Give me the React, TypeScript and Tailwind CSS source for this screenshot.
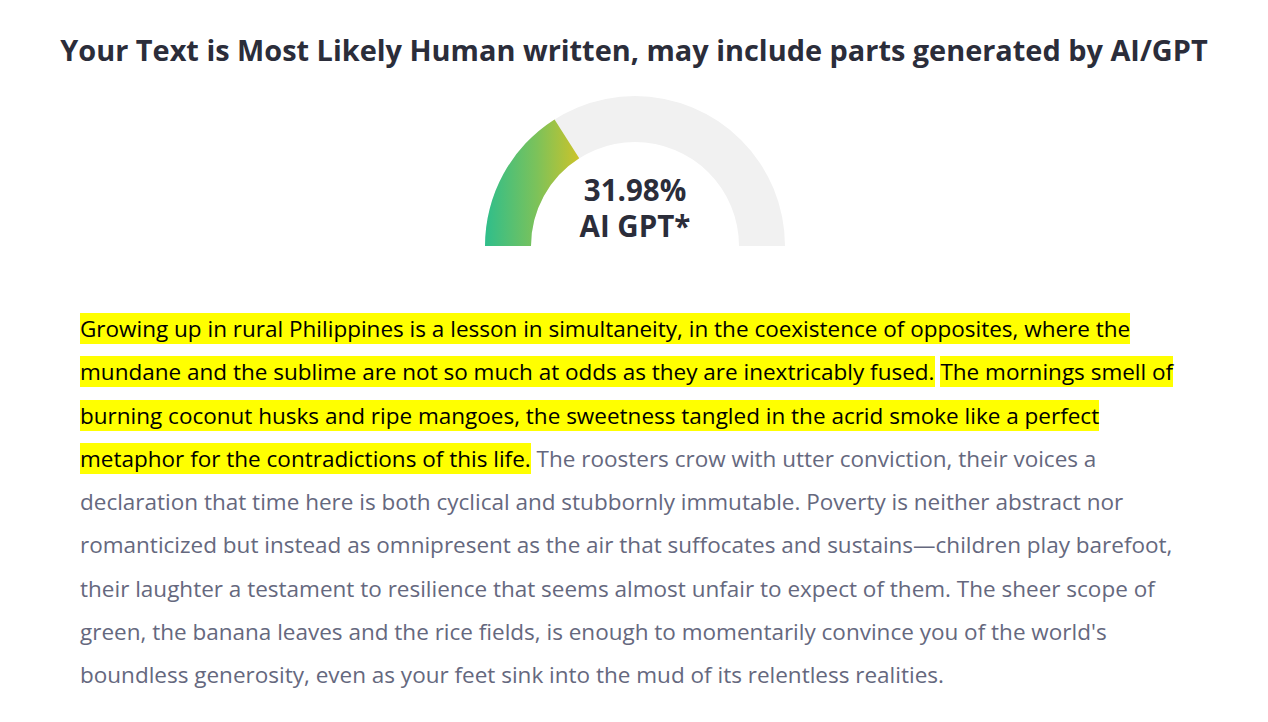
const Gauge = ({ value }: { value: number }) => {
  const a = Math.PI * (1 - value / 100);
  const ox = 150 + 150 * Math.cos(a);
  const oy = 150 - 150 * Math.sin(a);
  const ix = 150 + 104 * Math.cos(a);
  const iy = 150 - 104 * Math.sin(a);
  return (
    <div className="relative w-[300px] h-[150px] ml-[2px]">
      <svg width="300" height="150" viewBox="0 0 300 150" className="block">
        <defs>
          <linearGradient id="g" x1="0" y1="0" x2="94" y2="0" gradientUnits="userSpaceOnUse">
            <stop offset="0" stopColor="#2fbe8b" />
            <stop offset="0.55" stopColor="#7cc25a" />
            <stop offset="1" stopColor="#cbc32a" />
          </linearGradient>
        </defs>
        <path d="M0,150 A150,150 0 0 1 300,150 L254,150 A104,104 0 0 0 46,150 Z" fill="#f1f1f1" />
        <path
          d={`M0,150 A150,150 0 0 1 ${ox},${oy} L${ix},${iy} A104,104 0 0 0 46,150 Z`}
          fill="url(#g)"
        />
      </svg>
      <div className="absolute left-0 right-0 top-[76px] text-center font-bold text-[29.5px] leading-[36px] text-[#2b2d3a]">
        <div>{value.toFixed(2)}%</div>
        <div>AI GPT*</div>
      </div>
    </div>
  );
};

export default function App() {
  return (
    <div className="min-h-screen bg-white font-['Open_Sans',sans-serif]">
      <h1 className="pt-[30px] text-center font-bold text-[28.9px] leading-[40px] text-[#2b2d3a]">
        Your Text is Most Likely Human written, may include parts generated by AI/GPT
      </h1>
      <div className="flex justify-center mt-[26px]">
        <Gauge value={31.98} />
      </div>
      <p className="mt-[61px] pl-[80px] pr-[80px] text-[22.5px] leading-[43.25px] text-[#65687e]">
        <span className="bg-[#ffff00] text-black">
          Growing up in rural Philippines is a lesson in simultaneity, in the coexistence of opposites, where the mundane and the sublime are not so much at odds as they are inextricably fused.
        </span>{" "}
        <span className="bg-[#ffff00] text-black">
          The mornings smell of burning coconut husks and ripe mangoes, the sweetness tangled in the acrid smoke like a perfect metaphor for the contradictions of this life.
        </span>{" "}
        The roosters crow with utter conviction, their voices a declaration that time here is both cyclical and stubbornly immutable. Poverty is neither abstract nor romanticized but instead as omnipresent as the air that suffocates and sustains—children play barefoot, their laughter a testament to resilience that seems almost unfair to expect of them. The sheer scope of green, the banana leaves and the rice fields, is enough to momentarily convince you of the world's boundless generosity, even as your feet sink into the mud of its relentless realities.
      </p>
    </div>
  );
}
